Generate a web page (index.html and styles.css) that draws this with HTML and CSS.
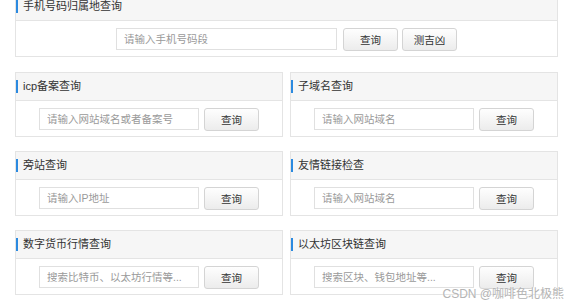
FILE: index.html
```html
<!DOCTYPE html>
<html lang="zh-CN">
    <head>
        <meta charset="UTF-8">
        <meta name="viewport" content="width=device-width, initial-scale=1.0">
        <title>站长工具</title>
        <link rel="stylesheet" href="styles.css">
    </head>
    <body>
        <div class="page">
            <div class="panel wide">
                <div class="panel-head">手机号码归属地查询</div>
                <div class="panel-body">
                    <input class="field field-wide" type="text" placeholder="请输入手机号码段">
                    <button class="btn">查询</button>
                    <button class="btn btn-next">测吉凶</button>
                </div>
            </div>

            <div class="grid">
                <div class="panel">
                    <div class="panel-head">icp备案查询</div>
                    <div class="panel-body">
                        <input class="field" type="text" placeholder="请输入网站域名或者备案号">
                        <button class="btn">查询</button>
                    </div>
                </div>
                <div class="panel">
                    <div class="panel-head">子域名查询</div>
                    <div class="panel-body">
                        <input class="field" type="text" placeholder="请输入网站域名">
                        <button class="btn">查询</button>
                    </div>
                </div>
                <div class="panel">
                    <div class="panel-head">旁站查询</div>
                    <div class="panel-body">
                        <input class="field" type="text" placeholder="请输入IP地址">
                        <button class="btn">查询</button>
                    </div>
                </div>
                <div class="panel">
                    <div class="panel-head">友情链接检查</div>
                    <div class="panel-body">
                        <input class="field" type="text" placeholder="请输入网站域名">
                        <button class="btn">查询</button>
                    </div>
                </div>
                <div class="panel">
                    <div class="panel-head">数字货币行情查询</div>
                    <div class="panel-body">
                        <input class="field" type="text" placeholder="搜索比特币、以太坊行情等...">
                        <button class="btn">查询</button>
                    </div>
                </div>
                <div class="panel">
                    <div class="panel-head">以太坊区块链查询</div>
                    <div class="panel-body">
                        <input class="field" type="text" placeholder="搜索区块、钱包地址等...">
                        <button class="btn">查询</button>
                    </div>
                </div>
            </div>
        </div>
        <div class="watermark">CSDN @咖啡色北极熊</div>
    </body>
</html>
```

FILE: styles.css
```css
* {
    margin: 0;
    padding: 0;
    box-sizing: border-box;
}

body {
    font-family: "Liberation Sans", "Noto Sans CJK SC", sans-serif;
    background: #fff;
    color: #333;
    width: 568px;
    height: 304px;
    overflow: hidden;
    position: relative;
}

.page {
    margin: -8px 10px 0 15px;
}

.grid {
    display: grid;
    grid-template-columns: 268px 268px;
    column-gap: 7px;
    row-gap: 14px;
    margin-top: 15px;
}

.panel {
    border: 1px solid #e4e4e4;
    height: 65px;
}

.panel-head {
    height: 28px;
    line-height: 27px;
    background: #f6f6f6;
    border-bottom: 1px solid #e4e4e4;
    font-size: 11px;
    padding-left: 7px;
    position: relative;
}

.panel-head::before {
    content: '';
    position: absolute;
    left: 0;
    top: 7px;
    width: 2px;
    height: 13px;
    background: #2b8ae0;
}

.panel-body {
    display: flex;
    justify-content: center;
    align-items: center;
    height: 35px;
    padding-top: 1px;
}

.field {
    width: 160px;
    height: 22px;
    border: 1px solid #e0e0e0;
    padding: 0 7px;
    font-family: inherit;
    font-size: 10.5px;
    color: #333;
    outline: none;
}

.field::placeholder {
    color: #9a9a9a;
}

.field-wide {
    width: 221px;
}

.btn {
    width: 55px;
    height: 23px;
    margin-left: 5px;
    border: 1px solid #d4d4d4;
    border-radius: 3px;
    background: linear-gradient(#fefefe, #ececec);
    font-family: inherit;
    font-size: 10.5px;
    color: #333;
}

.wide .btn {
    margin-left: 6px;
}

.wide .btn-next {
    margin-left: 4px;
}

.watermark {
    position: absolute;
    right: 4px;
    bottom: 3px;
    font-size: 12px;
    color: #b4b4b4;
    text-shadow: 0 0 2px #fff;
}
```
